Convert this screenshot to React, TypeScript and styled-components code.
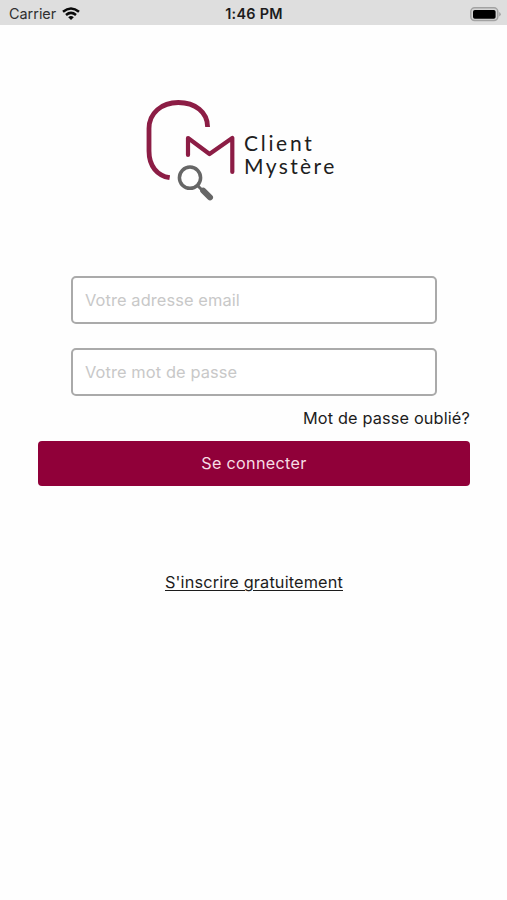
import React from "react";
import styled, { createGlobalStyle } from "styled-components";

const GlobalStyle = createGlobalStyle`
  * { box-sizing: border-box; }
  body {
    margin: 0;
    background: #fefefe;
    color: #1c1c1c;
    font-family: Inter, "Liberation Sans", sans-serif;
  }
`;

const Screen = styled.main`
  display: flex;
  flex-direction: column;
  width: 507px;
  height: 900px;
  overflow: hidden;
`;

const StatusBar = styled.header`
  display: grid;
  grid-template-columns: 1fr auto 1fr;
  align-items: center;
  height: 25px;
  padding: 3px 6px 0 9px;
  background: #dedede;
  font-size: 14.4px;
  line-height: 20px;
`;

const Carrier = styled.div`
  display: flex;
  align-items: center;
  gap: 6px;
  color: #303030;
`;

const Clock = styled.time`
  font-weight: 600;
  letter-spacing: 0.3px;
  padding-right: 2px;
`;

const BatterySlot = styled.div`
  display: flex;
  justify-content: flex-end;
`;

const Brand = styled.div`
  display: flex;
  width: 196px;
  height: 104px;
  margin: 73px 0 0 145px;
`;

const BrandName = styled.div`
  margin: 33px 0 0 4px;
  font-family: Lato, sans-serif;
  font-size: 21px;
  line-height: 23px;
  color: #202020;
`;

const BrandLine = styled.div<{ $tracking: number }>`
  letter-spacing: ${(p) => p.$tracking}px;
  white-space: nowrap;
`;

const Form = styled.form`
  display: flex;
  flex-direction: column;
  margin: 74px 37px 0 38px;
`;

const Field = styled.input`
  width: 366px;
  height: 48px;
  margin: 0 0 24px 33px;
  padding: 0 12px;
  border: 2px solid #aaa;
  border-radius: 5px;
  background: #fff;
  font: 16.4px/20px Inter, sans-serif;
  letter-spacing: 0.1px;
  outline: none;
  &::placeholder { color: #c8c8c8; opacity: 1; }
`;

const Forgot = styled.a`
  align-self: flex-end;
  margin-top: -14px;
  height: 35px;
  font-size: 16.3px;
  line-height: 24px;
  letter-spacing: 0.15px;
`;

const Submit = styled.button`
  height: 45px;
  padding: 0 0 2px;
  border: 0;
  border-radius: 4px;
  background: #900039;
  color: #f7dce5;
  font: 16.2px/20px Inter, sans-serif;
  letter-spacing: 0.3px;
`;

const SignUp = styled.a`
  align-self: center;
  margin-top: 84px;
  font-size: 16.3px;
  line-height: 24px;
  letter-spacing: 0.15px;
  text-decoration: underline;
  text-decoration-thickness: 1px;
  text-underline-offset: 2px;
`;

const Wifi = () => (
  <svg width="18" height="14" viewBox="0 0 18 14" fill="none" stroke="#090909" strokeWidth="2.5">
    <path d="M1 4.8Q9-1.8 17 4.8" />
    <path d="M4 8Q9 3.8 14 8" />
    <path d="M6.2 10.2Q9 8 11.8 10.2L9 13Z" fill="#090909" stroke="none" />
  </svg>
);

const Battery = () => (
  <svg width="31" height="15" viewBox="0 0 31 15">
    <rect x="0.8" y="0.8" width="27" height="12.8" rx="3.8" fill="#d5d5d5" stroke="#a2a2a2" strokeWidth="1.5" />
    <rect x="3" y="2.9" width="22.6" height="8.8" rx="1.8" fill="#000" />
    <path d="M29.2 5v4.6q1.6-.8 1.6-2.3T29.2 5Z" fill="#a2a2a2" />
  </svg>
);

const Emblem = () => (
  <svg width="95" height="104" viewBox="145 98 95 104" fill="none">
    <path
      d="M207.6 127C207.6 112 195 102.5 178.3 102.5S149 113 149 128.5V151C149 166 157 175.5 169.7 177.7"
      stroke="#8c1d45"
      strokeWidth="4.8"
    />
    <path
      d="M188 155V138L209.5 154L232.3 138V172"
      stroke="#8c1d45"
      strokeWidth="4.2"
      strokeLinecap="round"
      strokeLinejoin="round"
    />
    <circle cx="190" cy="177.7" r="10.6" stroke="#666" strokeWidth="3.5" />
    <path d="M197.5 185.5L203 191" stroke="#666" strokeWidth="3" />
    <path d="M203.2 190.7L210 197.3" stroke="#666" strokeWidth="6" strokeLinecap="round" />
  </svg>
);

export default function App() {
  return (
    <>
      <GlobalStyle />
      <Screen>
        <StatusBar>
          <Carrier>Carrier <Wifi /></Carrier>
          <Clock>1:46 PM</Clock>
          <BatterySlot><Battery /></BatterySlot>
        </StatusBar>
        <Brand>
          <Emblem />
          <BrandName>
            <BrandLine $tracking={2.7}>Client</BrandLine>
            <BrandLine $tracking={2.4}>Mystère</BrandLine>
          </BrandName>
        </Brand>
        <Form>
          <Field type="email" placeholder="Votre adresse email" />
          <Field type="password" placeholder="Votre mot de passe" />
          <Forgot>Mot de passe oublié?</Forgot>
          <Submit type="button">Se connecter</Submit>
          <SignUp>S'inscrire gratuitement</SignUp>
        </Form>
      </Screen>
    </>
  );
}
